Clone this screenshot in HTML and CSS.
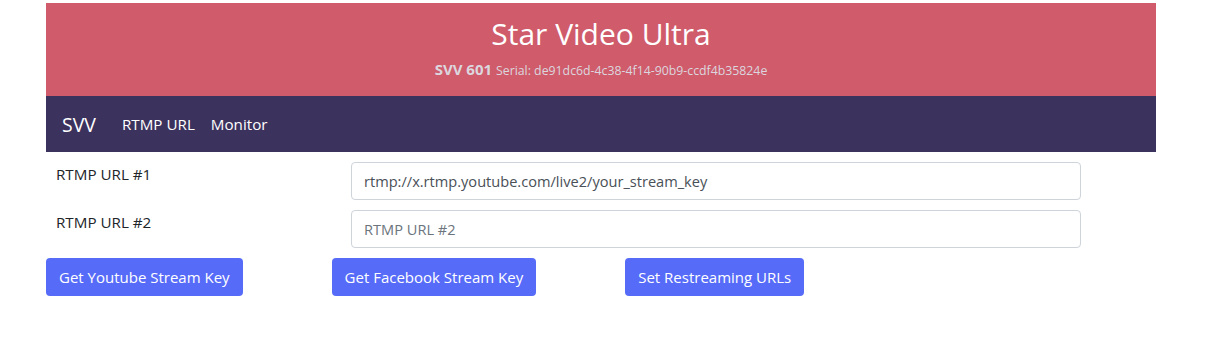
FILE: index.html
```html
<!DOCTYPE html>
<html>
<head>
<meta charset="utf-8">
<link rel="stylesheet" href="styles.css">
</head>
<body>
<div class="page">
  <header class="hero">
    <h1 class="title">Star Video Ultra</h1>
    <p class="sub"><b>SVV 601</b> <small>Serial: de91dc6d-4c38-4f14-90b9-ccdf4b35824e</small></p>
  </header>
  <nav class="navbar">
    <span class="brand">SVV</span>
    <a class="nav-link">RTMP URL</a>
    <a class="nav-link">Monitor</a>
  </nav>
  <form class="form">
    <div class="row">
      <label class="label">RTMP URL #1</label>
      <input class="input" type="text" value="rtmp://x.rtmp.youtube.com/live2/your_stream_key">
    </div>
    <div class="row">
      <label class="label">RTMP URL #2</label>
      <input class="input" type="text" placeholder="RTMP URL #2">
    </div>
    <div class="buttons">
      <button type="button" class="btn">Get Youtube Stream Key</button>
      <button type="button" class="btn">Get Facebook Stream Key</button>
      <button type="button" class="btn">Set Restreaming URLs</button>
    </div>
  </form>
</div>
</body>
</html>
```
FILE: styles.css
```css
html, body {
  margin: 0;
  padding: 0;
  background: #fff;
}
body {
  font-family: "Open Sans", "Noto Sans", sans-serif;
  color: #212529;
  font-size: 15px;
}
.page {
  width: 1110px;
  margin-left: 46px;
  padding-top: 3px;
}
.hero {
  background: #cf5b6b;
  height: 93px;
  box-sizing: border-box;
  padding-top: 12px;
  text-align: center;
  color: #fff;
}
.title {
  margin: 0;
  font-weight: 400;
  font-size: 30px;
  line-height: 38px;
}
.sub {
  margin: 6px 0 0;
  color: #dcd6de;
  font-size: 15px;
  line-height: 20px;
}
.sub small {
  font-size: 12.3px;
}
.navbar {
  background: #3c325e;
  height: 56px;
  display: flex;
  align-items: center;
  padding-left: 16px;
}
.brand {
  color: #fff;
  font-size: 19.5px;
  margin-right: 26px;
}
.nav-link {
  color: #fff;
  font-size: 15.2px;
  margin-right: 16px;
}
.form {
  padding-top: 10px;
}
.row {
  display: grid;
  grid-template-columns: 305px 730px;
  margin-bottom: 10px;
}
.label {
  padding-left: 10px;
  padding-top: 2px;
  font-size: 15.2px;
  line-height: 20px;
}
.input {
  height: 38px;
  box-sizing: border-box;
  border: 1px solid #ced4da;
  border-radius: 4px;
  padding: 0 12px;
  font-family: inherit;
  font-size: 14.6px;
  color: #495057;
  outline: none;
}
.input::placeholder {
  color: #6c757d;
}
.buttons {
  display: flex;
  gap: 89px;
}
.btn {
  height: 38px;
  background: #566bf8;
  color: #fff;
  border: none;
  border-radius: 4px;
  padding: 0 13px;
  font-family: inherit;
  font-size: 15px;
}
```
